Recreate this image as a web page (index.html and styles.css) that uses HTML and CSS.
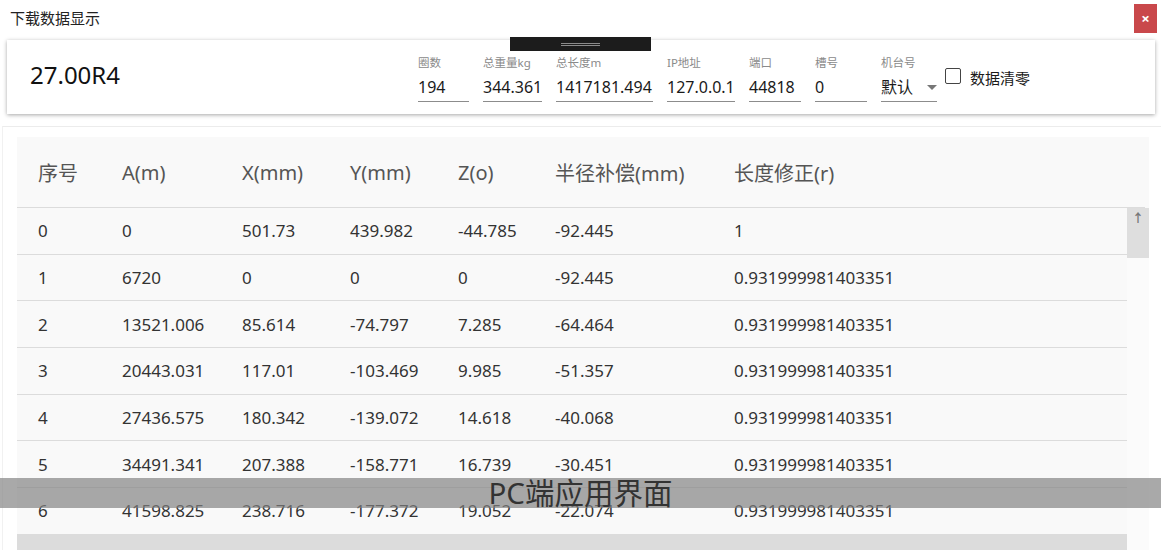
FILE: index.html
```html
<!DOCTYPE html>
<html>
<head>
  <meta charset="utf-8">
  <title>下载数据显示</title>
  <link rel="stylesheet" href="styles.css">
</head>
<body>
  <div class="titlebar">
    <span class="title">下载数据显示</span>
    <div class="close">×</div>
  </div>

  <div class="top-card">
    <div class="handle"><span></span></div>
    <div class="big">27.00R4</div>
    <div class="fields">
      <div class="field w-quan">
        <label>圈数</label>
        <div class="val">194</div>
      </div>
      <div class="field w-zl">
        <label>总重量kg</label>
        <div class="val">344.361</div>
      </div>
      <div class="field w-cd">
        <label>总长度m</label>
        <div class="val">1417181.494</div>
      </div>
      <div class="field w-ip">
        <label>IP地址</label>
        <div class="val">127.0.0.1</div>
      </div>
      <div class="field w-dk">
        <label>端口</label>
        <div class="val">44818</div>
      </div>
      <div class="field w-ch">
        <label>槽号</label>
        <div class="val">0</div>
      </div>
      <div class="field w-jt">
        <label>机台号</label>
        <div class="val select">默认<span class="caret"></span></div>
      </div>
      <div class="check">
        <span class="box"></span>
        <span>数据清零</span>
      </div>
    </div>
  </div>

  <div class="content">
    <div class="grid">
      <div class="grid-head">
        <div>序号</div>
        <div>A(m)</div>
        <div>X(mm)</div>
        <div>Y(mm)</div>
        <div>Z(o)</div>
        <div>半径补偿(mm)</div>
        <div>长度修正(r)</div>
      </div>
      <div class="grid-body">
        <div class="rows">
          <div class="row"><div>0</div><div>0</div><div>501.73</div><div>439.982</div><div>-44.785</div><div>-92.445</div><div>1</div></div>
          <div class="row"><div>1</div><div>6720</div><div>0</div><div>0</div><div>0</div><div>-92.445</div><div>0.931999981403351</div></div>
          <div class="row"><div>2</div><div>13521.006</div><div>85.614</div><div>-74.797</div><div>7.285</div><div>-64.464</div><div>0.931999981403351</div></div>
          <div class="row"><div>3</div><div>20443.031</div><div>117.01</div><div>-103.469</div><div>9.985</div><div>-51.357</div><div>0.931999981403351</div></div>
          <div class="row"><div>4</div><div>27436.575</div><div>180.342</div><div>-139.072</div><div>14.618</div><div>-40.068</div><div>0.931999981403351</div></div>
          <div class="row"><div>5</div><div>34491.341</div><div>207.388</div><div>-158.771</div><div>16.739</div><div>-30.451</div><div>0.931999981403351</div></div>
          <div class="row"><div>6</div><div>41598.825</div><div>238.716</div><div>-177.372</div><div>19.052</div><div>-22.074</div><div>0.931999981403351</div></div>
          <div class="row selected"></div>
        </div>
        <div class="scrollbar">
          <div class="thumb">↑</div>
        </div>
      </div>
    </div>
  </div>

  <div class="caption">PC端应用界面</div>
</body>
</html>
```

FILE: styles.css
```css
body {
  margin: 0;
  width: 1161px;
  height: 550px;
  overflow: hidden;
  position: relative;
  background-color: #fff;
  font-family: "Noto Sans", "Noto Sans CJK SC", sans-serif;
  color: #222;
}

.titlebar {
  height: 34px;
  display: flex;
  align-items: center;
  justify-content: space-between;
}

.titlebar .title {
  margin-left: 10px;
  font-size: 15px;
  color: #222;
}

.close {
  width: 23px;
  height: 29px;
  margin-right: 4px;
  margin-top: 3px;
  background-color: #c9484b;
  color: #fff;
  font-size: 15px;
  font-weight: bold;
  line-height: 28px;
  text-align: center;
}

.top-card {
  position: relative;
  margin: 6px 6px 0 7px;
  height: 74px;
  background-color: #fff;
  box-shadow: 0 1px 4px rgba(0, 0, 0, 0.35);
  display: flex;
  align-items: center;
}

.handle {
  position: absolute;
  top: -3px;
  left: 503px;
  width: 141px;
  height: 14px;
  background-color: #1c1c1c;
  display: flex;
  align-items: center;
  justify-content: center;
}

.handle span {
  width: 39px;
  height: 1px;
  border-top: 1px solid #8a8a8a;
  border-bottom: 1px solid #8a8a8a;
}

.big {
  width: 388px;
  padding-left: 23px;
  margin-bottom: 6px;
  font-size: 24px;
  color: #111;
}

.fields {
  display: flex;
  align-items: center;
  gap: 14px;
}

.field {
  margin-top: 4px;
  border-bottom: 1px solid #8c8c8c;
}

.field label {
  display: block;
  font-size: 11.5px;
  line-height: 14px;
  color: #8a8a8a;
}

.field .val {
  margin-top: 6px;
  font-size: 16px;
  line-height: 22px;
  padding-bottom: 3px;
  color: #1a1a1a;
  white-space: nowrap;
}

.w-quan { width: 51px; }
.w-zl { width: 59px; }
.w-cd { width: 97px; }
.w-ip { width: 68px; }
.w-dk { width: 52px; }
.w-ch { width: 52px; }
.w-jt { width: 56px; }

.select {
  position: relative;
}

.caret {
  position: absolute;
  right: 0;
  top: 9px;
  border-left: 5px solid transparent;
  border-right: 5px solid transparent;
  border-top: 5px solid #777;
}

.check {
  margin-left: -6px;
  display: flex;
  align-items: center;
  font-size: 15px;
  color: #1a1a1a;
}

.check .box {
  width: 14px;
  height: 14px;
  border: 1.5px solid #444;
  border-radius: 2px;
  margin-right: 9px;
  margin-bottom: 3px;
}

.content {
  margin-top: 12px;
  margin-left: 2px;
  border-top: 1px solid #ececec;
  border-left: 1px solid #f1f1f1;
  padding: 10px 12px 0 14px;
}

.grid {
  background-color: #f9f9f9;
}

.grid-head,
.row {
  display: grid;
  grid-template-columns: 84px 120px 108px 108px 97px 179px 1fr;
  padding-left: 21px;
  align-items: center;
}

.grid-head {
  height: 71px;
  box-sizing: border-box;
  border-bottom: 1px solid #dcdcdc;
  margin-right: 4px;
  font-size: 20px;
  color: #555;
}

.grid-body {
  display: flex;
}

.rows {
  flex: 1;
}

.row {
  height: 46.67px;
  box-sizing: border-box;
  border-bottom: 1px solid #dcdcdc;
  font-size: 17px;
  color: #333;
}

.row.selected {
  height: 20px;
  border: none;
  background-color: #dcdcdc;
}

.scrollbar {
  width: 22px;
  background-color: #fbfbfb;
}

.thumb {
  height: 50px;
  background-color: #dedede;
  color: #777;
  font-size: 12px;
  font-weight: bold;
  text-align: center;
  line-height: 22px;
}

.caption {
  position: absolute;
  left: 0;
  right: 0;
  top: 478px;
  height: 30px;
  background-color: rgba(128, 128, 128, 0.68);
  color: #333;
  font-size: 29.5px;
  line-height: 30px;
  text-align: center;
}
```
